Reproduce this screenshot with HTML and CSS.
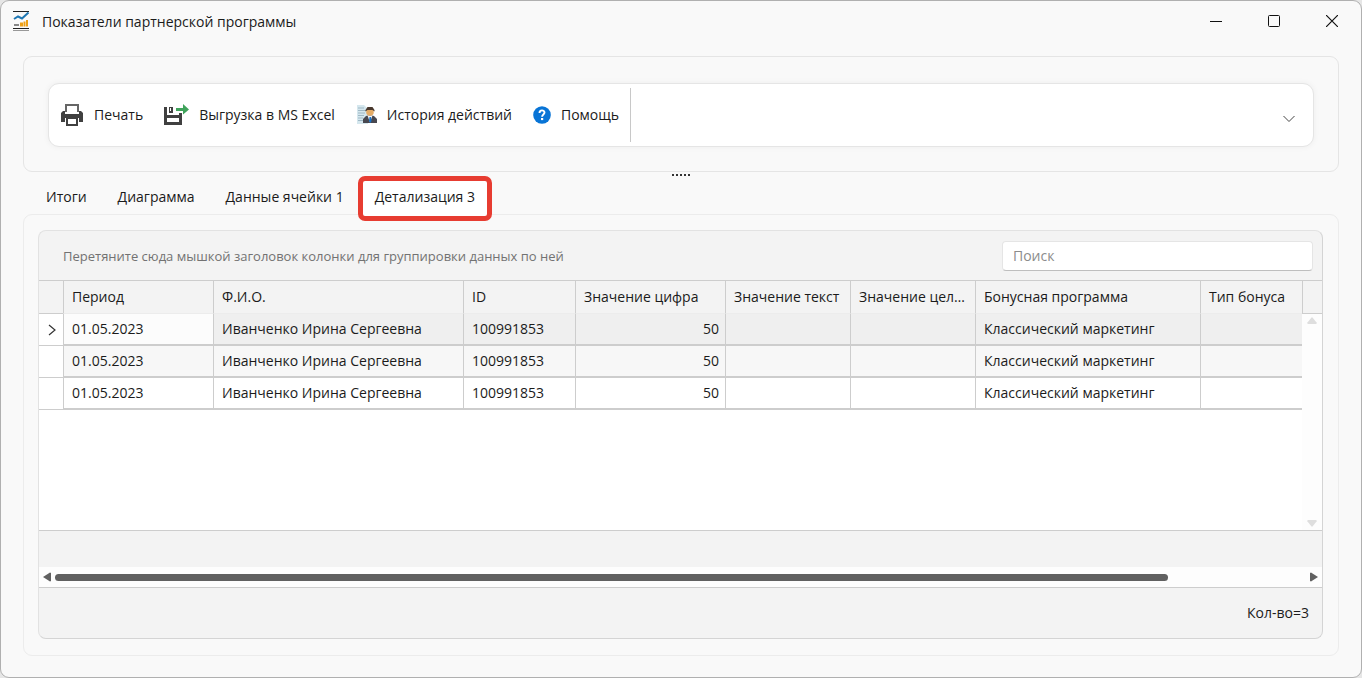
FILE: index.html
```html
<!DOCTYPE html>
<html lang="ru">
<head>
<meta charset="utf-8">
<title>Показатели партнерской программы</title>
<link rel="stylesheet" href="styles.css">
</head>
<body>
<div class="window">
  <header class="titlebar">
    <svg class="app-icon" width="18" height="20" viewBox="0 0 18 20" fill="none">
      <path d="M1 .5h16M1 17.500h16" stroke="#222" />
      <path d="M1 19.500h16" stroke="#999" />
      <path d="M2 8l4-2.500 4 2 6.500-6" stroke="#1f77b4" stroke-width="2" />
      <path d="M2 14h5" stroke="#888" stroke-width="2" />
      <path d="M8 15.500v-4h3v4zM11.500 15.500v-5h2v5zM14 15.500V9h2v6.500z" fill="#efa014" />
    </svg>
    <h1 class="title">Показатели партнерской программы</h1>
    <button class="win-btn" aria-label="Свернуть"><svg width="12" height="12" viewBox="0 0 12 12"><path d="M0 6.500h12" stroke="#111" /></svg></button>
    <button class="win-btn" aria-label="Развернуть"><svg width="12" height="12" viewBox="0 0 12 12"><rect x=".5" y=".5" width="11" height="11" rx="1" fill="none" stroke="#111" /></svg></button>
    <button class="win-btn" aria-label="Закрыть"><svg width="12" height="12" viewBox="0 0 12 12"><path d="M0 0l12 12M12 0L0 12" stroke="#111" stroke-width="1.200" /></svg></button>
  </header>

  <section class="toolbar-panel">
    <div class="toolbar">
      <button class="tool">
        <svg width="24" height="24" viewBox="0 0 24 24">
          <path d="M6 9V2h12v7" fill="#fff" stroke="#666" stroke-width="2" />
          <path d="M3 8h2v3h14V8h2l2 2v9h-4v-4H5v4H1v-9z" fill="#404040" />
          <path d="M7 15h10v7H7z" fill="#fff" stroke="#404040" stroke-width="2" />
        </svg>
        Печать
      </button>
      <button class="tool">
        <svg width="25" height="24" viewBox="0 0 25 24">
          <path d="M0 4h3v8h12V10h3v12H0zM3 15v4h12v-4z" fill="#404040" fill-rule="evenodd" />
          <path d="M5 4h4v6H5z" fill="#404040" /><path d="M6 5h1v3H6z" fill="#fff" />
          <path d="M12 5h7V1l6 5.500-6 5V8h-7z" fill="#3fa35b" />
        </svg>
        Выгрузка в MS Excel
      </button>
      <button class="tool">
        <svg width="21" height="24" viewBox="0 0 21 24">
          <path d="M1 2h7l4 4v15H1z" fill="#d5e7ee" />
          <path d="M2 5h6M2 7.500h8M2 10h7M2 12.500h6M2 15h5M2 17.500h5" stroke="#9fb8c5" />
          <path d="M7 20v-4l3-3 4-1 4 1 3 3v4z" fill="#484850" />
          <path d="M11.500 12.500l2.500 7 2.500-7z" fill="#f1f5fb" />
          <path d="M13.500 14h1.500l.5 4-1.300 2-1.200-2z" fill="#1672c9" />
          <circle cx="14" cy="9" r="3.800" fill="#e5ac67" />
          <path d="M9.500 8.500V7l2-3h5l2 3v1.500l-2-1.500h-5z" fill="#49382d" />
        </svg>
        История действий
      </button>
      <button class="tool">
        <svg width="18" height="18" viewBox="0 0 18 18">
          <circle cx="9" cy="9" r="8.800" fill="#0874d6" />
          <path d="M6.500 7c0-3.500 5-3.300 5-.5 0 1.900-2.400 2-2.400 4.200" fill="none" stroke="#fff" stroke-width="1.900" />
          <rect x="8" y="12" width="2.200" height="2.100" fill="#fff" />
        </svg>
        Помощь
      </button>
      <span class="separator"></span>
      <button class="expand" aria-label="Развернуть панель"><svg width="12" height="8" viewBox="0 0 12 8"><path d="M.5 1L6 6.500 11.500 1" fill="none" stroke="#444" /></svg></button>
    </div>
  </section>

  <div class="splitter"><i></i><i></i><i></i><i></i><i></i></div>

  <nav class="tabs" role="tablist">
    <button class="tab" role="tab">Итоги</button>
    <button class="tab" role="tab">Диаграмма</button>
    <button class="tab" role="tab">Данные ячейки 1</button>
    <button class="tab tab-active" role="tab" aria-selected="true">Детализация 3</button>
  </nav>

  <main class="page">
    <div class="grid">
      <div class="group-panel">
        <span class="hint">Перетяните сюда мышкой заголовок колонки для группировки данных по ней</span>
        <input class="search" type="search" placeholder="Поиск" aria-label="Поиск">
      </div>
      <div class="grid-body">
        <div class="rows">
          <table>
            <colgroup><col class="c-mark"><col class="c-period"><col class="c-name"><col class="c-id"><col class="c-num"><col class="c-val"><col class="c-val"><col class="c-prog"><col></colgroup>
            <thead>
              <tr><th></th><th>Период</th><th>Ф.И.О.</th><th>ID</th><th>Значение цифра</th><th>Значение текст</th><th>Значение целое</th><th>Бонусная программа</th><th>Тип бонуса</th></tr>
            </thead>
            <tbody>
              <tr class="current"><td class="mark"><svg width="8" height="12" viewBox="0 0 8 12"><path d="M1 1l6 5-6 5" fill="none" stroke="#333" stroke-width="1.200" /></svg></td><td class="focused">01.05.2023</td><td>Иванченко Ирина Сергеевна</td><td>100991853</td><td class="num">50</td><td></td><td></td><td>Классический маркетинг</td><td></td></tr>
              <tr class="alt"><td class="mark"></td><td>01.05.2023</td><td>Иванченко Ирина Сергеевна</td><td>100991853</td><td class="num">50</td><td></td><td></td><td>Классический маркетинг</td><td></td></tr>
              <tr><td class="mark"></td><td>01.05.2023</td><td>Иванченко Ирина Сергеевна</td><td>100991853</td><td class="num">50</td><td></td><td></td><td>Классический маркетинг</td><td></td></tr>
            </tbody>
          </table>
        </div>
        <div class="vscroll">
          <div class="vscroll-head"></div>
          <div class="vscroll-track">
            <svg width="10" height="8" viewBox="0 0 10 8"><path d="M5 0l5 6-1 1H1L0 6z" fill="#dedede" /></svg>
            <svg width="10" height="8" viewBox="0 0 10 8"><path d="M5 8l5-6-1-1H1L0 2z" fill="#dedede" /></svg>
          </div>
        </div>
      </div>
      <div class="summary"></div>
      <div class="hscroll">
        <svg width="8" height="10" viewBox="0 0 8 10"><path d="M0 5l7-4.500 1 .5v8l-1 .5z" fill="#606060" /></svg>
        <div class="hscroll-track"><div class="hscroll-thumb"></div></div>
        <svg width="8" height="10" viewBox="0 0 8 10"><path d="M8 5L1 .5 0 1v8l1 .5z" fill="#606060" /></svg>
      </div>
      <footer class="grid-footer">Кол-во=3</footer>
    </div>
  </main>
</div>
</body>
</html>
```

FILE: styles.css
```css
* { box-sizing: border-box; }
body {
  margin: 0;
  background: #e6e6e6;
  color: #1b1b1b;
  font: 14px/20px "Open Sans", "Noto Sans", sans-serif;
}
button {
  border: 0;
  padding: 0;
  background: none;
  color: inherit;
  font: inherit;
}
svg { display: block; flex: none; }

.window {
  display: flex;
  flex-direction: column;
  min-height: 100vh;
  border: 1px solid #b0b0b0;
  border-radius: 9px;
  background: #f9f9f9;
}
.titlebar {
  display: flex;
  align-items: center;
  height: 40px;
  padding-left: 11px;
}
.title {
  flex: 1;
  margin: 0 0 0 12px;
  padding-top: 1px;
  font-size: 14px;
  font-weight: 400;
}
.win-btn {
  display: flex;
  align-items: center;
  justify-content: center;
  width: 58px;
  height: 40px;
}

.toolbar-panel {
  margin: 15px 22px 0;
  padding: 26px 24px 24px;
  border: 1px solid #e5e5e5;
  border-radius: 9px;
}
.toolbar {
  display: flex;
  align-items: center;
  gap: 21px;
  height: 64px;
  padding: 0 18px 0 11px;
  border: 1px solid #e5e5e5;
  border-radius: 11px;
  background: #fff;
  box-shadow: 0 0 6px rgba(0, 0, 0, 0.05);
}
.tool {
  display: flex;
  align-items: center;
  gap: 10px;
  white-space: nowrap;
}
.separator {
  width: 1px;
  height: 54px;
  margin-left: -10px;
  background: #c8c8c8;
}
.expand { margin-left: auto; padding-top: 8px; }

.splitter {
  display: flex;
  justify-content: center;
  gap: 2px;
  height: 6px;
  padding-top: 2px;
}
.splitter i { width: 2px; height: 2px; background: #333; }

.tabs {
  display: flex;
  gap: 1px;
  height: 37px;
  padding-left: 30px;
}
.tab { padding: 0 15px; }
.tab-active {
  z-index: 1;
  height: 45px;
  margin: -2px 0 0 -2px;
  padding: 0 12px 4px;
  border: 5px solid #e73c31;
  border-radius: 7px;
  background: #fff;
}

.page {
  display: flex;
  flex: 1;
  margin: -1px 22px 21px;
  padding: 15px 15px 16px 14px;
  border: 1px solid #ececec;
  border-radius: 9px;
}
.grid {
  display: flex;
  flex: 1;
  flex-direction: column;
  min-width: 0;
  border: 1px solid #d4d4d4;
  border-top-color: #e2e2e2;
  border-left-color: #e2e2e2;
  border-radius: 8px;
  background: #f3f3f3;
  overflow: hidden;
}
.group-panel {
  display: flex;
  align-items: center;
  justify-content: space-between;
  height: 50px;
  padding: 0 9px 0 24px;
  border-bottom: 1px solid #cdcdcd;
}
.hint { color: #727272; font-size: 13px; }
.search {
  width: 311px;
  height: 30px;
  padding: 0 10px;
  border: 1px solid #e5e5e5;
  border-bottom-color: #bebebe;
  border-radius: 4px;
  background: #fff;
  font: inherit;
}
.search::placeholder { color: #8c8c8c; }

.grid-body {
  display: flex;
  flex: 1;
  border-bottom: 1px solid #cdcdcd;
  background: #fff;
}
.rows { flex: 1; min-width: 0; }
table {
  width: 100%;
  table-layout: fixed;
  border-collapse: separate;
  border-spacing: 0;
}
.c-mark { width: 24px; }
.c-period { width: 150px; }
.c-name { width: 250px; }
.c-id { width: 112px; }
.c-num { width: 150px; }
.c-val { width: 125px; }
.c-prog { width: 225px; }
th, td {
  height: 32px;
  padding: 0 8px;
  border-left: 1px solid #cdcdcd;
  font-weight: 400;
  text-align: left;
  white-space: nowrap;
  overflow: hidden;
  text-overflow: ellipsis;
}
th { height: 33px; border-bottom: 1px solid #ececec; background: #f3f3f3; }
td { border-bottom: 2px solid #cdcdcd; }
th:first-child { border-left: 0; border-bottom-color: #cdcdcd; }
.mark { padding: 0 0 0 9px; border-left: 0; border-bottom-width: 1px; background: #fff; }
.num { padding-right: 6px; text-align: right; }
.current { background: #efefef; }
.alt { background: #f7f7f7; }
.focused { background: #fcfcfc; }

.vscroll { display: flex; flex-direction: column; width: 20px; }
.vscroll-head {
  height: 33px;
  border-left: 1px solid #cdcdcd;
  border-bottom: 1px solid #cdcdcd;
  background: #f3f3f3;
}
.vscroll-track {
  display: flex;
  flex: 1;
  flex-direction: column;
  align-items: center;
  justify-content: space-between;
  padding: 3px 0;
  background: #fdfdfd;
}
.summary { height: 36px; }
.hscroll {
  display: flex;
  align-items: center;
  gap: 4px;
  height: 21px;
  padding: 0 4px;
  border-bottom: 1px solid #cdcdcd;
  background: #fdfdfd;
}
.hscroll-track { flex: 1; }
.hscroll-thumb { width: 89%; height: 7px; border-radius: 4px; background: #606060; }
.grid-footer { padding: 15px 13px; text-align: right; }
```
